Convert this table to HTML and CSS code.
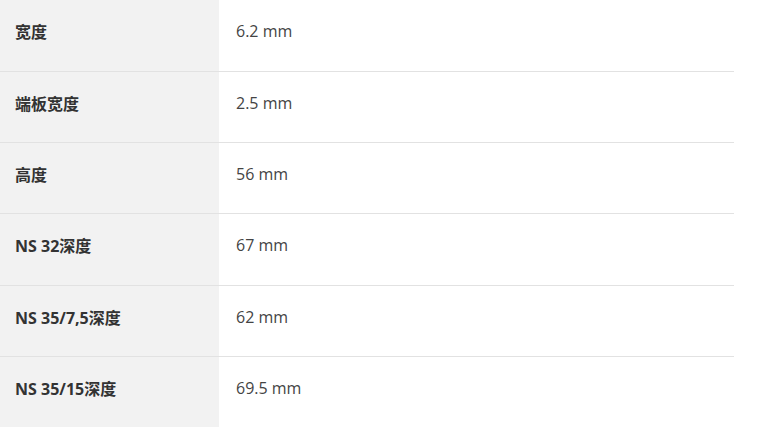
FILE: index.html
```html
<!DOCTYPE html>
<html lang="zh">
<head>
<meta charset="utf-8">
<link rel="stylesheet" href="styles.css">
</head>
<body>
<table class="specs">
  <tbody>
    <tr><th>宽度</th><td>6.2 mm</td></tr>
    <tr><th>端板宽度</th><td>2.5 mm</td></tr>
    <tr><th>高度</th><td>56 mm</td></tr>
    <tr><th>NS 32深度</th><td>67 mm</td></tr>
    <tr><th>NS 35/7,5深度</th><td>62 mm</td></tr>
    <tr><th>NS 35/15深度</th><td>69.5 mm</td></tr>
  </tbody>
</table>
</body>
</html>
```
FILE: styles.css
```css
html, body {
  margin: 0;
  padding: 0;
  background: #fff;
}
.specs {
  width: 734px;
  border-collapse: collapse;
  font-family: "Open Sans", "Noto Sans CJK SC", sans-serif;
  font-size: 16px;
}
.specs tr {
  height: 71.25px;
  border-bottom: 1px solid #e2e2e2;
}
.specs tr:last-child {
  border-bottom: none;
}
.specs th {
  width: 219px;
  box-sizing: border-box;
  padding: 0 0 8px 15px;
  background: #f2f2f2;
  text-align: left;
  font-weight: 700;
  color: #333;
  vertical-align: middle;
}
.specs td {
  padding: 0 0 8px 17px;
  color: #444;
  vertical-align: middle;
}
```
